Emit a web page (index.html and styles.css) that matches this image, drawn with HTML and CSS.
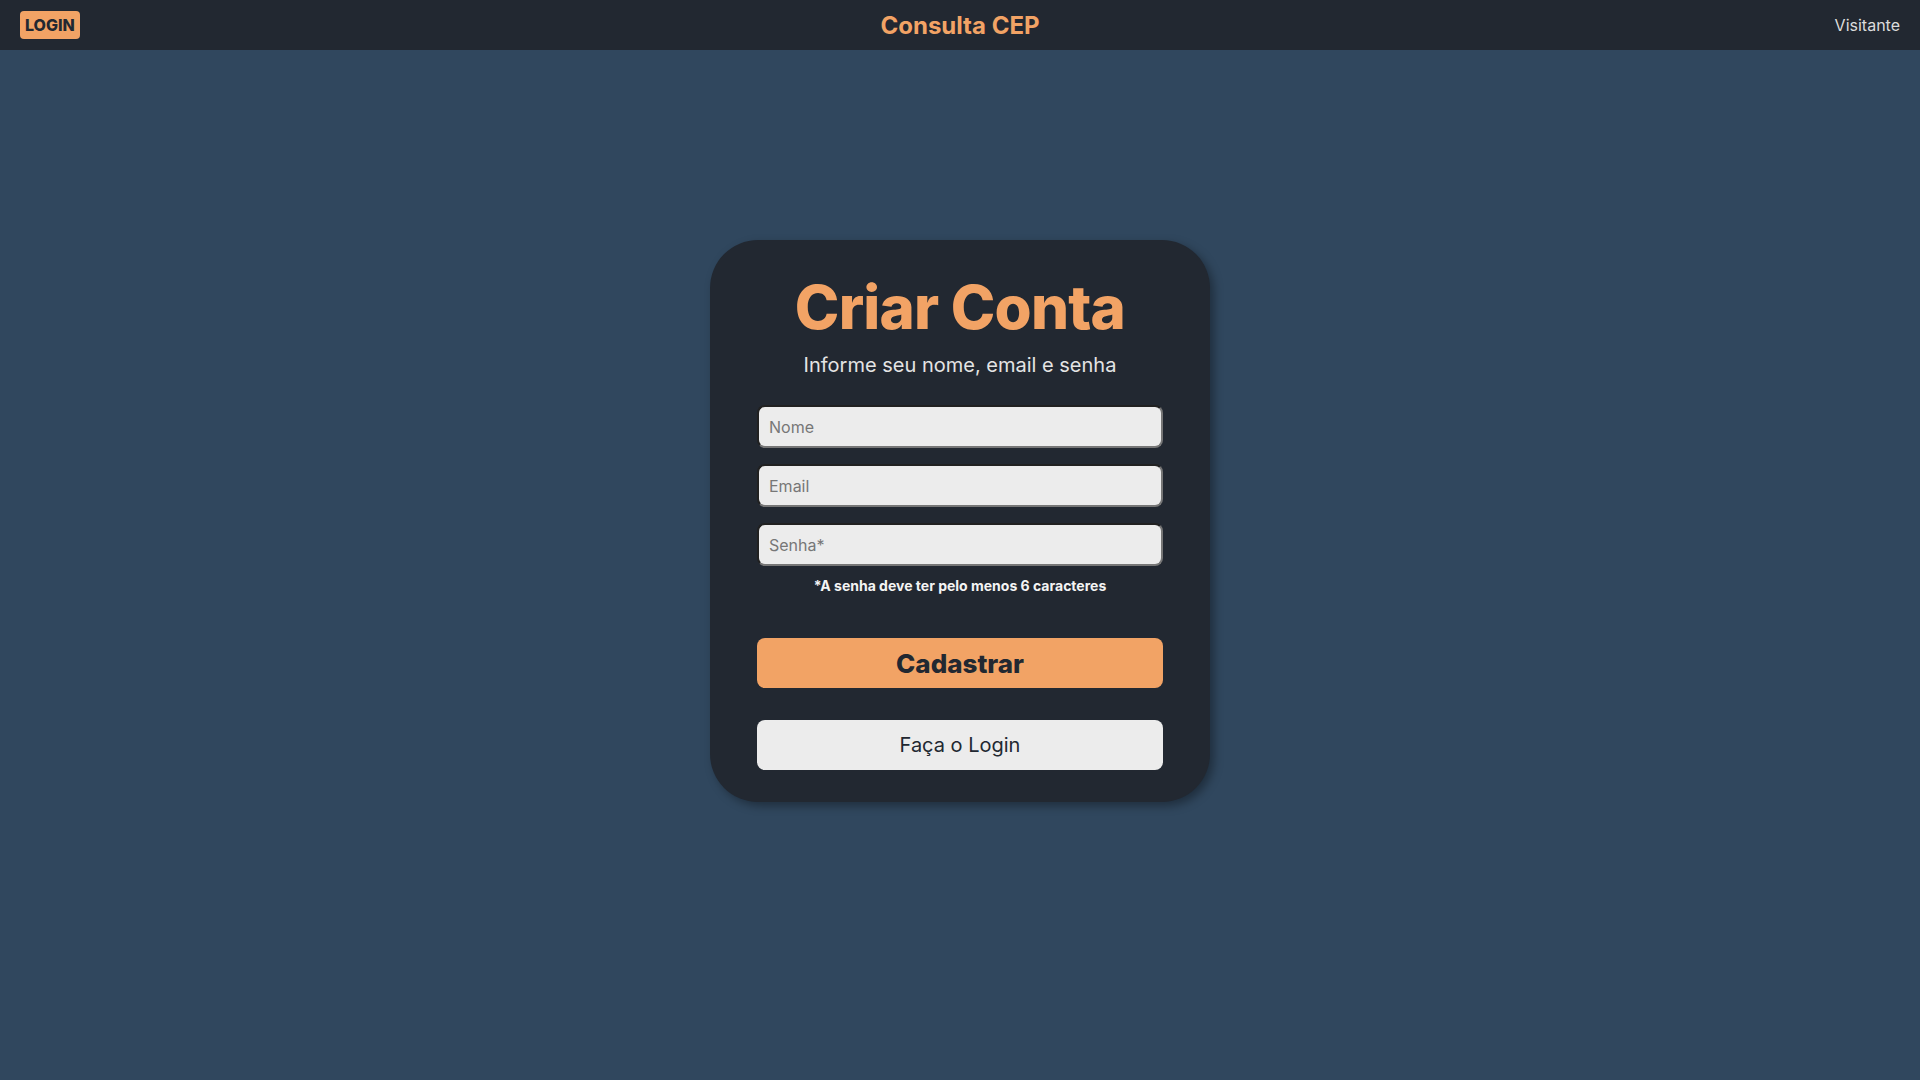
FILE: index.html
```html
<!DOCTYPE html>
<html lang="pt-BR">
<head>
<meta charset="utf-8">
<title>Consulta CEP</title>
<link rel="stylesheet" href="styles.css">
</head>
<body>
<header class="topbar">
  <button class="login-badge">LOGIN</button>
  <h2 class="brand">Consulta CEP</h2>
  <span class="user">Visitante</span>
</header>
<main class="page">
  <section class="card">
    <h1 class="title">Criar Conta</h1>
    <p class="subtitle">Informe seu nome, email e senha</p>
    <form class="form">
      <input class="field" type="text" placeholder="Nome">
      <input class="field" type="email" placeholder="Email">
      <input class="field" type="password" placeholder="Senha*">
      <p class="hint">*A senha deve ter pelo menos 6 caracteres</p>
      <button type="button" class="btn-primary">Cadastrar</button>
      <button type="button" class="btn-secondary">Faça o Login</button>
    </form>
  </section>
</main>
</body>
</html>
```
FILE: styles.css
```css
* { box-sizing: border-box; }
html, body {
  margin: 0;
  padding: 0;
  height: 100%;
}
body {
  background: #30475e;
  font-family: Inter, "Noto Sans", sans-serif;
  color: #ececec;
  display: flex;
  flex-direction: column;
}
.topbar {
  height: 50px;
  background: #222831;
  display: grid;
  grid-template-columns: 1fr auto 1fr;
  align-items: center;
  padding: 0 20px;
}
.login-badge {
  justify-self: start;
  background: #f2a365;
  color: #222831;
  border: none;
  border-radius: 4px;
  font-family: Inter, sans-serif;
  font-weight: 800;
  font-size: 16px;
  height: 28px;
  padding: 0 5px;
  line-height: 28px;
}
.brand {
  margin: 0;
  color: #f2a365;
  font-size: 24px;
  font-weight: 700;
}
.user {
  justify-self: end;
  font-size: 16px;
  color: #dcdcdc;
}
.page {
  flex: 1;
  display: flex;
  justify-content: center;
  padding-top: 190px;
}
.card {
  width: 500px;
  height: 562px;
  background: #222831;
  border-radius: 48px;
  box-shadow: 4px 4px 10px rgba(0, 0, 0, 0.35);
  padding: 31px 47px 32px;
  display: flex;
  flex-direction: column;
  align-items: center;
}
.title {
  margin: 0;
  font-size: 60px;
  line-height: 72px;
  font-weight: 800;
  color: #f2a365;
  letter-spacing: -0.8px;
}
.subtitle {
  margin: 10px 0 0;
  font-size: 20px;
  line-height: 24px;
  color: #e4e4e4;
}
.form {
  width: 100%;
  margin-top: 28px;
  display: flex;
  flex-direction: column;
}
.field {
  height: 43px;
  width: 100%;
  background: #ececec;
  border: 2px inset #767676;
  border-radius: 8px;
  padding: 0 10px;
  font-family: Inter, sans-serif;
  font-size: 16px;
  color: #222831;
  margin-bottom: 16px;
}
.field:last-of-type { margin-bottom: 0; }
.field::placeholder { color: #777; }
.hint {
  margin: 11px 0 0;
  font-size: 14px;
  line-height: 17px;
  font-weight: 700;
  text-align: center;
  color: #f4f4f4;
}
.btn-primary {
  margin-top: 44px;
  height: 50px;
  width: 100%;
  border: none;
  border-radius: 8px;
  background: #f2a365;
  color: #222831;
  font-family: Inter, sans-serif;
  font-size: 26px;
  font-weight: 800;
}
.btn-secondary {
  margin-top: 32px;
  height: 50px;
  width: 100%;
  border: none;
  border-radius: 8px;
  background: #ececec;
  color: #222831;
  font-family: Inter, sans-serif;
  font-size: 20px;
  font-weight: 400;
}
```
